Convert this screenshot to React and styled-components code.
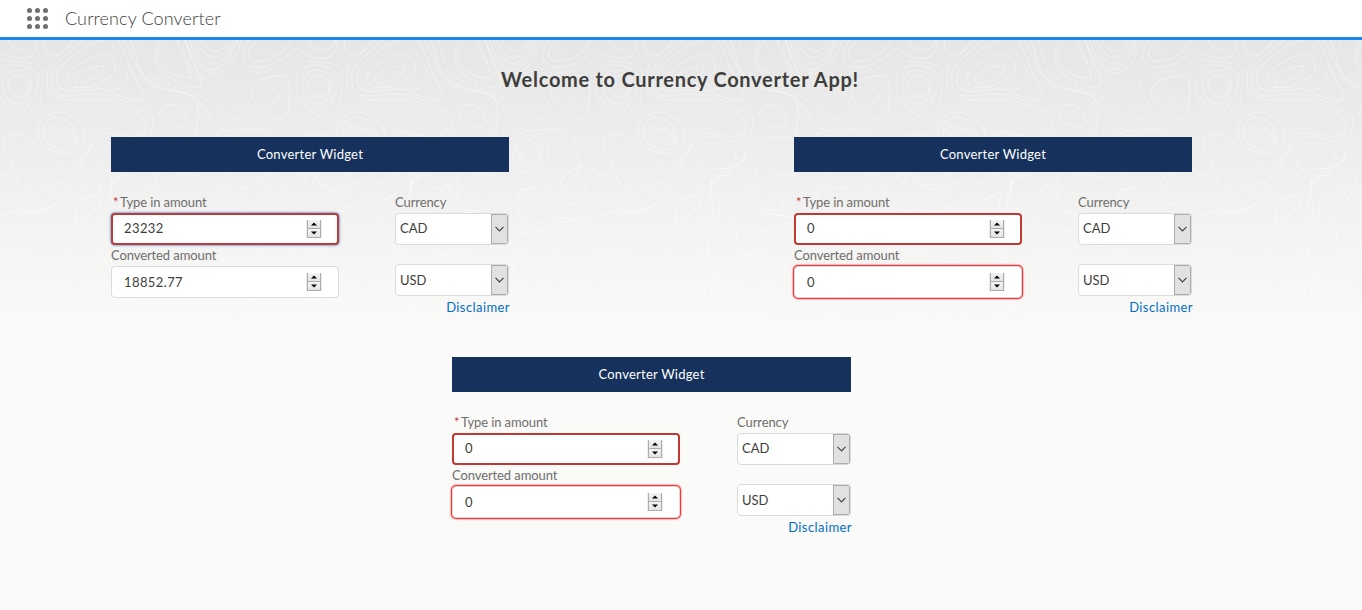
import React from "react";
import styled, { createGlobalStyle, css } from "styled-components";

const Global = createGlobalStyle`
  * { box-sizing: border-box; }
  body { margin: 0; background: #fafaf9; font-family: Lato, "Open Sans", sans-serif; font-size: 13px; color: #3e3e3c; }
`;

const Page = styled.div`
  height: 610px;
  overflow: hidden;
  display: flex;
  flex-direction: column;
`;

const Header = styled.header`
  height: 40px;
  flex: none;
  display: flex;
  align-items: center;
  gap: 16px;
  padding: 0 0 0 26px;
  background: #fff;
  border-bottom: 3px solid #1589ee;
`;

const Waffle = styled.div`
  display: grid;
  grid-template-columns: repeat(3, 5px);
  gap: 3px;
  padding: 0 1px;
`;

const Dot = styled.i`
  width: 5px;
  height: 5px;
  border-radius: 50%;
  background: #706e6b;
`;

const AppName = styled.h1`
  margin: 0;
  padding-bottom: 2px;
  font-size: 18px;
  line-height: 34px;
  font-weight: 300;
  letter-spacing: 0.12px;
`;

const Main = styled.main`
  position: relative;
  isolation: isolate;
  flex: 1;
  background: linear-gradient(#e6e6e6, #fafaf9 290px);
`;

const Backdrop = styled.svg`
  position: absolute;
  inset: 0 0 auto;
  z-index: -1;
  width: 100%;
  height: 290px;
`;

const Welcome = styled.h2`
  margin: 0;
  padding: 24px 2px 0 0;
  height: 97px;
  font-size: 20px;
  line-height: 30px;
  font-weight: 700;
  letter-spacing: 0.72px;
  text-align: center;
`;

const Widgets = styled.div`
  width: 1081px;
  margin-left: 111px;
  display: flex;
  flex-direction: column;
`;

const WidgetRow = styled.div`
  height: 220px;
  display: flex;
  justify-content: ${(p) => (p.$centered ? "center" : "space-between")};
`;

const Card = styled.section`
  width: ${(p) => p.$width}px;
`;

const CardTitle = styled.div`
  height: 35px;
  line-height: 35px;
  letter-spacing: 0.24px;
  background: #16325c;
  color: #fff;
  text-align: center;
`;

const Columns = styled.div`
  display: flex;
  justify-content: space-between;
  padding-top: 21px;
`;

const AmountColumn = styled.div`
  width: 228px;
`;

const CurrencyColumn = styled.div`
  width: 114px;
  display: flex;
  flex-direction: column;
`;

const Label = styled.div`
  height: ${(p) => p.$height || 20}px;
  line-height: ${(p) => (p.$height ? 21 : 19)}px;
  letter-spacing: -0.1px;
  color: #706e6b;
  white-space: nowrap;
`;

const Required = styled.span`
  color: #c23934;
  margin: 0 1.5px 0 2px;
`;

const states = {
  plain: css`border: 1px solid #dddbda;`,
  required: css`border: 2px solid #c23934;`,
  focused: css`border: 2px solid #c23934; box-shadow: 0 0 3px #0070d2;`,
  invalid: css`border: 1px solid #dddbda; box-shadow: 0 0 1.5px 1px #ff0000;`,
};

const Field = styled.div`
  height: 32px;
  display: flex;
  align-items: center;
  justify-content: space-between;
  padding: 0 ${(p) => (p.$state === "plain" || p.$state === "invalid" ? "16px 0 12px" : "15px 0 11px")};
  border-radius: 4px;
  background: #fff;
  ${(p) => states[p.$state]}
`;

const Value = styled.span`
  line-height: 20px;
  letter-spacing: ${(p) => p.$spacing || 0}px;
  padding-bottom: ${(p) => (p.$raised ? 2 : 0)}px;
`;

const Stepper = styled.div`
  width: 16px;
  height: 18px;
  display: flex;
  flex-direction: column;
  background: #ececec;
`;

const Step = styled.div`
  flex: 1;
  display: flex;
  align-items: center;
  justify-content: center;
  margin: 0 1px;
  border: solid #acacac;
  border-width: 0 1px 1px;
  background: linear-gradient(#f4f4f4, #e4e4e4);
`;

const SelectBox = styled.div`
  height: 32px;
  margin-bottom: ${(p) => p.$gap}px;
  display: flex;
  justify-content: space-between;
  align-items: center;
  padding-left: 4px;
  border: 1px solid #dddbda;
  border-radius: 4px;
  background: #fff;
  overflow: hidden;
`;

const SelectButton = styled.div`
  width: 17px;
  height: 30px;
  display: flex;
  align-items: center;
  justify-content: center;
  padding-right: 1px;
  background: #e1e1e1;
  border: 1px solid #adadad;
`;

const Disclaimer = styled.a`
  align-self: flex-end;
  margin-right: -1px;
  line-height: 20px;
  letter-spacing: 0.42px;
  color: #006dcc;
`;

const contours = [
  "M9 0C11 13 32 14 36 0M2 12Q12 20 28 18Q38 14 37 0",
  "M45 0C42 11 49 17 58 14C68 9 73 3 76 0",
  "M0 30C8 23 30 22 38 36C40 52 28 64 22 75C15 79 7 66 0 57",
  "M3 43C5 30 14 29 23 31C34 36 33 52 23 63C12 68 2 54 3 43Z",
  "M8 43C10 34 26 33 29 43C31 54 22 58 16 56C9 52 7 48 8 43Z",
  "M75 41C74 34 94 24 103 26C109 32 89 42 80 43Q76 44 75 41Z",
  "M67 38C68 28 98 11 108 15C120 25 116 34 104 40C88 49 68 53 67 38Z",
  "M58 45C52 28 70 20 78 12C89 2 99 0 104 0M58 45C64 56 86 49 100 49C114 52 133 64 142 60C147 53 131 35 129 24Q123 8 117 0",
  "M53 48C47 26 61 21 68 13Q80 2 84 0M53 48C60 63 80 52 99 54C123 55 135 70 147 72C158 78 153 94 142 104",
  "M48 50C46 28 48 24 58 16L73 0M48 50C59 66 91 58 112 60C132 66 146 78 146 87C144 108 103 87 96 94C89 107 84 121 73 128",
  "M124 0C134 14 135 32 150 44C165 53 186 49 194 58C201 68 197 83 196 93C184 104 168 90 155 103C143 114 143 124 133 128L102 129C93 141 88 150 73 155",
  "M130 0C137 11 136 29 147 39C164 51 188 49 199 62C216 78 206 93 240 90C262 87 277 92 276 110C282 122 278 136 266 145",
  "M166 0C153 12 156 24 165 30C172 36 184 38 191 38C195 34 180 17 177 0",
  "M160 0C148 20 158 35 174 40C188 49 195 48 201 46C204 40 193 26 185 0",
  "M202 0C206 13 224 16 229 0M197 0C203 21 222 25 233 0M193 0C203 32 223 31 236 0M189 0C204 40 222 39 238 0M185 0C204 46 227 43 242 0",
  "M259 0C249 8 246 13 250 19C260 25 276 18 284 10L291 0M249 0C241 12 241 21 250 26C269 32 286 16 298 8",
  "M252 49C255 39 274 35 286 36C294 46 287 65 288 75C279 87 260 66 252 57Q249 54 252 49Z",
  "M268 53C270 47 278 49 280 54C279 63 268 65 268 53Z",
  "M159 75C161 64 171 61 179 68C187 77 190 87 178 87C166 84 159 80 159 75Z",
  "M38 88C42 72 60 68 73 77C92 89 87 109 67 113C48 114 35 101 38 88Z",
  "M43 90C43 76 63 72 74 87C83 108 69 114 57 108C46 104 42 99 43 90Z",
  "M46 95L44 88L49 91L51 84L56 89L60 87L63 91L65 87L68 94L73 91L72 98L77 96L73 104M50 96C49 91 54 91 54 95C53 99 50 98 50 96ZM64 102C64 98 68 99 68 103C66 106 63 105 64 102Z",
  "M4 101C5 91 18 93 30 98C40 109 55 117 60 125C54 134 34 137 26 146C15 147 16 129 9 119Q3 112 4 101Z",
  "M0 132C12 131 22 145 29 150C42 150 52 143 66 141C77 137 80 127 88 113C93 102 97 97 112 97C135 98 153 110 141 123C126 128 125 140 109 144",
  "M108 104C122 99 138 111 136 119C131 128 121 130 116 139C109 149 98 152 84 160M108 104C98 116 99 132 80 144",
  "M209 103C216 87 243 88 247 104C251 121 240 131 228 132C211 135 203 116 209 103Z",
  "M214 107C220 91 239 93 242 104C243 119 233 125 226 126C215 124 211 117 214 107Z",
  "M217 112L215 104L220 107L224 99L227 101L231 98L230 103L237 101L235 107L240 106M220 115C219 110 225 111 224 117C221 120 220 118 220 115ZM237 113C239 109 241 112 240 115Q237 117 237 113Z",
  "M262 150C258 137 271 131 282 127C294 126 302 139 315 146M297 137C299 133 307 135 307 141C302 146 297 142 297 137ZM-3 137C-1 133 7 135 7 141C2 146 -3 142 -3 137Z",
  "M262 153C265 145 280 143 285 147C287 154 279 165 271 164C264 163 260 158 262 153Z",
  "M218 158C215 144 233 150 245 148C260 144 266 133 282 123M218 158C217 178 219 184 230 184C247 184 252 176 266 178C286 185 293 163 312 169C330 175 342 168 352 160M0 176C10 166 25 171 37 171C57 168 62 153 69 145",
  "M230 194C220 193 212 195 213 204C217 221 208 230 216 238M213 199C232 185 247 196 259 182C276 180 288 185 296 175C307 168 321 174 341 173M0 174C20 169 33 177 48 169C70 158 72 145 85 138",
  "M222 211C220 200 237 199 242 204M248 209C257 196 253 190 267 188C288 189 305 187 317 192C323 200 303 213 302 224C299 238 287 248 269 250C247 252 240 238 249 227C260 220 258 207 272 203C287 202 298 210 292 224C281 242 265 247 257 238C252 227 272 229 279 226M0 190C20 184 22 194 12 204C0 215 4 235 -8 243",
  "M222 211C219 226 239 235 240 249C245 260 260 270 281 268M208 253C217 244 232 244 237 256C239 268 230 274 220 290",
  "M76 183C74 169 80 160 90 156C101 155 101 168 96 171C85 175 84 182 76 183Z",
  "M107 130C116 144 109 152 107 164C108 180 90 187 92 202C94 214 108 223 113 235C121 251 115 266 108 270",
  "M112 140C123 129 147 140 150 149C156 173 174 175 192 177C204 179 208 188 221 184M112 140C107 157 118 162 112 177C100 193 95 204 102 216C114 229 126 246 119 265",
  "M117 182C109 196 103 204 111 220C126 244 133 263 146 268M117 182C119 150 135 139 146 154C158 181 180 170 201 182",
  "M136 189C131 177 135 174 142 177C152 193 178 188 180 198C173 213 149 207 139 219Z",
  "M157 151C158 145 169 148 174 153C188 164 185 171 176 171C166 171 156 164 157 151Z",
  "M176 143C167 132 183 133 201 137C215 139 216 150 228 151M154 130C165 145 148 149 143 143",
  "M65 225C61 240 81 253 81 263C93 274 110 283 111 261C114 245 100 230 88 229C72 229 75 215 67 222Z",
  "M87 249C85 237 101 238 105 249C104 264 92 262 87 249Z",
  "M118 214C126 231 126 244 139 247C154 243 139 230 151 225C164 215 180 219 187 230C200 241 188 253 177 252C161 258 165 234 151 239",
  "M160 232C162 219 178 225 178 236C177 247 163 247 160 232Z",
  "M9 230C12 218 29 237 42 240C55 254 48 283 31 283C11 283 4 273 8 258C12 248 40 244 28 262C20 273 9 267 13 259M0 245C18 239 36 246 34 261C32 278 6 282 0 269",
  "M9 215C27 207 45 222 55 236C66 252 52 278 72 290M146 290C155 275 169 267 192 271",
];

const dashedContours = [
  "M0 20C20 24 37 20 42 30C44 43 39 51 41 66C62 71 98 64 116 71C136 82 131 88 122 82C107 79 98 83 94 92L82 115L69 142",
  "M112 6C122 19 134 34 123 46C109 56 90 41 70 49",
  "M138 0C145 16 142 33 157 39C176 46 191 54 204 57C219 64 228 80 245 80C257 74 244 56 240 42C222 35 216 49 201 37C188 31 187 18 178 0",
  "M242 29C253 37 274 31 284 25Q300 18 296 49C300 69 306 79 296 86C279 96 286 108 289 117",
  "M240 159C220 168 226 175 235 174C252 175 254 160 268 164C293 161 301 151 323 155M1 151C25 156 43 157 57 143",
  "M240 250C225 230 260 218 256 197C270 185 290 195 312 187",
  "M98 143C111 177 74 173 76 190C75 212 60 222 48 218C27 212 37 183 48 180C65 176 67 164 80 153",
  "M119 202C116 188 122 170 132 158C147 150 146 167 159 176C173 183 186 181 203 187M128 239C134 203 158 219 187 208C201 204 207 206 210 200",
];

function ContourBackdrop() {
  return (
    <Backdrop aria-hidden="true">
      <defs>
        <pattern id="contours" width="300" height="290" patternUnits="userSpaceOnUse">
          <g fill="none" stroke="#fff" strokeWidth="1" strokeOpacity=".38">
            {contours.map((d) => <path key={d} d={d} />)}
            <g strokeDasharray="4 3">{dashedContours.map((d) => <path key={d} d={d} />)}</g>
          </g>
        </pattern>
      </defs>
      <rect width="100%" height="290" fill="url(#contours)" />
    </Backdrop>
  );
}

function AmountField({ value, state }) {
  return (
    <Field $state={state}>
      <Value $spacing={0.4} $raised={state === "focused" || state === "required"}>{value}</Value>
      <Stepper>
        <Step><svg width="6" height="4"><path d="M0 3.5L3 .5L6 3.5Z" fill="#000" /></svg></Step>
        <Step><svg width="6" height="4"><path d="M0 .5L3 3.5L6 .5Z" fill="#000" /></svg></Step>
      </Stepper>
    </Field>
  );
}

function CurrencySelect({ value, gap, raised }) {
  return (
    <SelectBox $gap={gap}>
      <Value $raised={raised}>{value}</Value>
      <SelectButton>
        <svg width="9" height="6" fill="none" stroke="#444" strokeWidth="1.2"><path d="M.5 .8L4.5 4.8L8.5 .8" /></svg>
      </SelectButton>
    </SelectBox>
  );
}

function Widget({ amount, converted, amountState, convertedState, width = 398 }) {
  return (
    <Card $width={width}>
      <CardTitle>Converter Widget</CardTitle>
      <Columns>
        <AmountColumn>
          <Label><Required>*</Required>Type in amount</Label>
          <AmountField value={amount} state={amountState} />
          <Label $height={21}>Converted amount</Label>
          <AmountField value={converted} state={convertedState} />
        </AmountColumn>
        <CurrencyColumn>
          <Label>Currency</Label>
          <CurrencySelect value="CAD" gap={19} raised />
          <CurrencySelect value="USD" gap={1} />
          <Disclaimer>Disclaimer</Disclaimer>
        </CurrencyColumn>
      </Columns>
    </Card>
  );
}

export default function App() {
  return (
    <Page>
      <Global />
      <Header>
        <Waffle>{Array.from({ length: 9 }, (_, i) => <Dot key={i} />)}</Waffle>
        <AppName>Currency Converter</AppName>
      </Header>
      <Main>
        <ContourBackdrop />
        <Welcome>Welcome to Currency Converter App!</Welcome>
        <Widgets>
          <WidgetRow>
            <Widget amount="23232" converted="18852.77" amountState="focused" convertedState="plain" />
            <Widget amount="0" converted="0" amountState="required" convertedState="invalid" />
          </WidgetRow>
          <WidgetRow $centered>
            <Widget amount="0" converted="0" amountState="required" convertedState="invalid" width={399} />
          </WidgetRow>
        </Widgets>
      </Main>
    </Page>
  );
}
